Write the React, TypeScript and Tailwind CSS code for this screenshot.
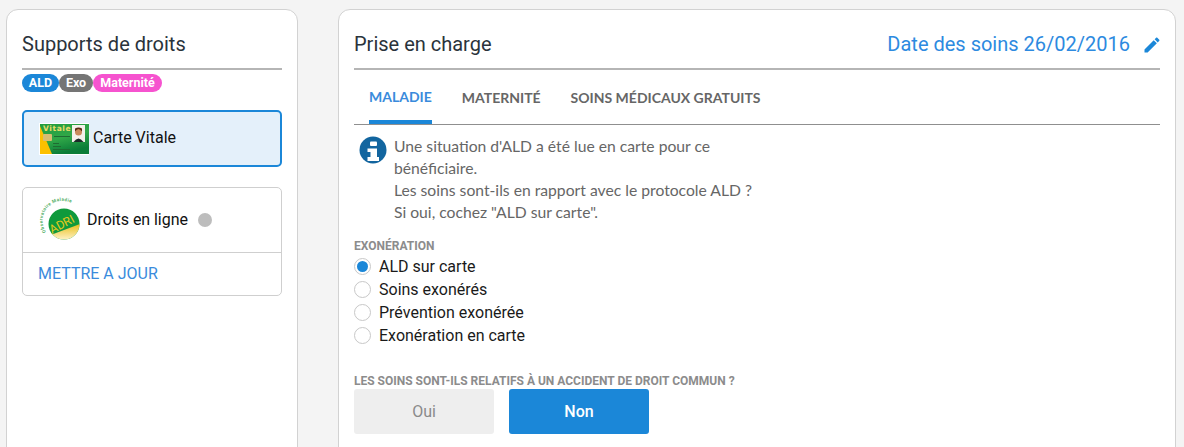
const roboto = "font-['Roboto',sans-serif]";

function VitaleCard() {
  return (
    <svg width="50" height="32" viewBox="0 0 50 32">
      <defs>
        <linearGradient id="vitaleGreen" x1="0" y1="0" x2="0.4" y2="1">
          <stop offset="0" stopColor="#1f9c3f" />
          <stop offset="0.55" stopColor="#31a848" />
          <stop offset="1" stopColor="#0b7d38" />
        </linearGradient>
      </defs>
      <rect x="0" y="0" width="50" height="32" fill="#fff" />
      <rect x="1" y="1" width="49" height="30" fill="url(#vitaleGreen)" />
      <path d="M1 3 L13 31 L1 31 Z" fill="#fcc000" />
      <rect x="4" y="11" width="9" height="7" rx="1" fill="#d8bd72" />
      <text x="4" y="8" fontSize="7.500" fontWeight="700" letterSpacing="0.600" fill="#e9dc6a" fontFamily="'DejaVu Sans',sans-serif">Vitale</text>
      <rect x="33" y="2" width="13" height="17" fill="#f4f1ea" />
      <circle cx="39.500" cy="9" r="3.500" fill="#c98a5a" />
      <path d="M36 8.500 q3.500 -5 7 0 l0 -3 q-3.500 -2 -7 0 z" fill="#5a2c14" />
      <path d="M34.500 19 q5 -7 10 0 z" fill="#1d2a2a" />
      <rect x="15" y="13" width="16" height="1" fill="#1f6b32" />
      <rect x="14" y="20" width="6" height="1" fill="#1f6b32" />
      <rect x="14" y="23" width="8" height="1" fill="#1f6b32" />
      <rect x="14" y="26" width="17" height="1" fill="#1f6b32" />
    </svg>
  );
}

function AdriLogo() {
  return (
    <svg width="40" height="42" viewBox="0 0 40 42" className="shrink-0 overflow-visible">
      <defs>
        <linearGradient id="adriBottom" x1="0" y1="0" x2="0" y2="1">
          <stop offset="0" stopColor="#e8be1a" />
          <stop offset="1" stopColor="#fff3c8" />
        </linearGradient>
        <clipPath id="adriClip">
          <circle cx="24" cy="25" r="15.500" />
        </clipPath>
        <path id="adriArc" d="M6 33 A20 20 0 0 1 36 7" />
      </defs>
      <text fontSize="4.600" fontWeight="700" letterSpacing="0.400" fill="#55b068" fontFamily="Roboto,sans-serif">
        <textPath href="#adriArc">Observatoire Maladie</textPath>
      </text>
      <g clipPath="url(#adriClip)">
        <rect x="8" y="9" width="32" height="32" fill="#0f9a3c" />
        <path d="M8 37 L40 25 L40 41 L8 41 Z" fill="url(#adriBottom)" />
      </g>
      <text x="12" y="35" fontSize="12" fill="#e3c91d" fontFamily="Roboto,sans-serif" transform="rotate(-28 12 35)">ADRI</text>
    </svg>
  );
}

function InfoIcon() {
  return (
    <svg width="28" height="28" viewBox="0 0 28 28" className="shrink-0">
      <circle cx="14" cy="14" r="13.500" fill="#12659f" />
      <rect x="11" y="5.500" width="7" height="4.500" rx="1" fill="#fff" />
      <path d="M8.500 12.500 h9.500 v8.500 h2 v4 h-11.500 v-4 h3 v-5 h-3 z" fill="#fff" />
    </svg>
  );
}

function EditIcon() {
  return (
    <svg width="20" height="20" viewBox="0 0 24 24" fill="#1b87d8" className="ml-3 -mr-[2px] mt-[1px]">
      <path d="M3 17.250V21h3.750L17.810 9.940l-3.750-3.750L3 17.250zM20.710 7.040c.390-.390.390-1.020 0-1.410l-2.340-2.340c-.390-.390-1.020-.390-1.410 0l-1.830 1.830 3.750 3.750 1.830-1.830z" />
    </svg>
  );
}

function Radio({ label, checked }: { label: string; checked?: boolean }) {
  return (
    <label className="flex items-center h-[23px]">
      <span className="w-[17px] h-[17px] rounded-full border border-[#c8c8c8] bg-white flex items-center justify-center mr-2">
        {checked && <span className="w-[11px] h-[11px] rounded-full bg-[#1b87d8]" />}
      </span>
      <span className="text-[16px] text-[#1a1a1a]">{label}</span>
    </label>
  );
}

export default function App() {
  return (
    <div className={`${roboto} h-[447px] overflow-hidden bg-[#f4f4f4] flex items-start pl-1.5 pt-[9px] gap-10`}>
      <aside className="w-[292px] h-[460px] shrink-0 bg-white border border-[#d2d2d2] rounded-xl px-[15px]">
        <h2 className="h-[57px] pt-[20px] text-[20px] leading-[29px] text-[#2a333b]">Supports de droits</h2>
        <div className="h-0.5 bg-[#b5b5b5] mt-[1px]" />
        <div className="flex mt-[4px] text-[12.5px] font-bold text-white leading-[18px]">
          <span className="w-[37px] text-center rounded-full bg-[#1b87d8]">ALD</span>
          <span className="w-[34px] text-center rounded-full bg-[#757575]">Exo</span>
          <span className="w-[69px] text-center rounded-full bg-[#f653cf]">Maternité</span>
        </div>
        <div className="mt-[18px] h-[57px] border-2 border-[#1b87d8] rounded-[5px] bg-[#e4f0fa] flex items-center pl-[15px] gap-1">
          <VitaleCard />
          <span className="text-[16px] text-[#111] pb-[2px]">Carte Vitale</span>
        </div>
        <div className="mt-5 h-[109px] border border-[#cfcfcf] rounded-[5px] flex flex-col">
          <div className="h-[65px] flex items-center pl-[17px] border-b border-[#cfcfcf]">
            <AdriLogo />
            <span className="text-[16px] text-[#111] ml-[7px] tracking-[-0.05px]">Droits en ligne</span>
            <span className="w-3.5 h-3.5 rounded-full bg-[#bdbdbd] ml-[10px]" />
          </div>
          <a className="pl-[15px] h-[42px] flex items-center text-[16px] text-[#3a8bdc]">METTRE A JOUR</a>
        </div>
      </aside>

      <main className="w-[838px] h-[460px] shrink-0 bg-white border border-[#d2d2d2] rounded-xl px-[15px]">
        <div className="h-[57px] pt-[20px] flex justify-between items-start">
          <h1 className="text-[20px] leading-[29px] text-[#2a333b]">Prise en charge</h1>
          <div className="flex items-center">
            <span className="text-[20px] leading-[29px] text-[#2d8ae0]">Date des soins 26/02/2016</span>
            <EditIcon />
          </div>
        </div>
        <div className="h-0.5 bg-[#b5b5b5] mt-[1px]" />
        <nav className="flex h-[55px] border-b border-[#8f8f8f] font-['Lato',sans-serif] text-[14px] font-bold pl-[15px] gap-[30px]">
          <span className="h-[54px] pt-[2px] flex items-center border-b-4 border-[#1b87d8] text-[#3a8bdc]">MALADIE</span>
          <span className="h-[54px] flex items-center text-[#666]">MATERNITÉ</span>
          <span className="h-[54px] flex items-center text-[#666]">SOINS MÉDICAUX GRATUITS</span>
        </nav>
        <div className="flex items-start gap-[7px] mt-[11px] pl-[5px]">
          <InfoIcon />
          <p className="font-['Lato',sans-serif] text-[15.7px] leading-[22px] text-[#666] w-[370px] -mt-[1px]">
            Une situation d'ALD a été lue en carte pour ce bénéficiaire.
            <br />
            Les soins sont-ils en rapport avec le protocole ALD ?
            <br />
            Si oui, cochez "ALD sur carte".
          </p>
        </div>
        <div className="mt-[16px] text-[12px] leading-[14px] font-bold text-[#8c8c8c]">EXONÉRATION</div>
        <div className="mt-[2px] flex flex-col">
          <Radio label="ALD sur carte" checked />
          <Radio label="Soins exonérés" />
          <Radio label="Prévention exonérée" />
          <Radio label="Exonération en carte" />
        </div>
        <div className="mt-[27px] text-[12px] leading-[14px] font-bold text-[#8c8c8c]">LES SOINS SONT-ILS RELATIFS À UN ACCIDENT DE DROIT COMMUN ?</div>
        <div className="mt-[1px] flex gap-[15px]">
          <button className="w-[140px] h-[45px] rounded-[3px] bg-[#eeeeee] text-[16px] text-[#8a8a8a]">Oui</button>
          <button className="w-[140px] h-[45px] rounded-[3px] bg-[#1b87d8] text-[16px] font-medium text-white">Non</button>
        </div>
      </main>
    </div>
  );
}
